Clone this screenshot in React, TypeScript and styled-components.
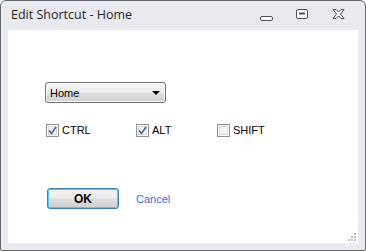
import styled, { createGlobalStyle } from "styled-components"

const GlobalStyle = createGlobalStyle`
  html, body {
    margin: 0;
    padding: 0;
    background: #ffffff;
  }
  * {
    box-sizing: border-box;
  }
`

// window frame
const Window = styled.div`
  width: 366px;
  height: 251px;
  display: flex;
  flex-direction: column;
  background: #e8eaef;
  border: 1px solid #62656c;
  border-radius: 6px 6px 2px 2px;
  padding: 0 7px 7px 7px;
  overflow: hidden;
`

const TitleBar = styled.div`
  height: 29px;
  flex: none;
  display: flex;
  align-items: center;
  padding-left: 3px;
`

const Title = styled.span`
  flex: 1;
  font-family: "Open Sans", "Noto Sans", sans-serif;
  font-size: 12.5px;
  color: #1f1f1f;
  margin-top: -3px;
`

const Caption = styled.div`
  display: flex;
  align-items: center;
  margin-top: -4px;
  margin-right: 2px;
`

const CaptionButton = styled.div<{ $low?: boolean }>`
  width: 36px;
  height: 16px;
  display: flex;
  align-items: ${({ $low }) => ($low ? "flex-end" : "center")};
  justify-content: center;
  padding-bottom: ${({ $low }) => ($low ? "1px" : "0")};
`

const Client = styled.div`
  position: relative;
  flex: 1;
  background: #ffffff;
  padding: 52px 0 0 37px;
  font-family: "Liberation Sans", Arial, sans-serif;
  font-size: 11px;
  color: #000000;
`

// combo box
const Combo = styled.div`
  width: 121px;
  height: 21px;
  display: flex;
  align-items: center;
  justify-content: space-between;
  padding: 0 5px 0 4px;
  border: 1px solid #707070;
  border-radius: 3px;
  background: linear-gradient(#f4f4f4 0%, #ececec 48%, #dfdfdf 52%, #d2d2d2 100%);
  box-shadow: inset 0 0 0 1px #fbfbfb;
`

const ComboArrow = styled.span`
  width: 0;
  height: 0;
  border-left: 4px solid transparent;
  border-right: 4px solid transparent;
  border-top: 4px solid #000000;
  margin-top: 1px;
`

// checkboxes
const CheckRow = styled.div`
  display: grid;
  grid-template-columns: 90px 81px auto;
  margin-top: 21px;
  margin-left: 1px;
`

const CheckItem = styled.label`
  display: flex;
  align-items: center;
  gap: 3px;
  height: 13px;
`

const Box = styled.span`
  width: 13px;
  height: 13px;
  flex: none;
  border: 1px solid #8e8f8f;
  background: #f4f4f4;
  box-shadow: inset 0 0 0 1px #ffffff, inset 0 0 0 2px #d8d9db;
  display: flex;
  align-items: center;
  justify-content: center;
`

const Label = styled.span`
  line-height: 13px;
`

// buttons
const ButtonRow = styled.div`
  display: flex;
  align-items: center;
  gap: 17px;
  margin-top: 51px;
  margin-left: 2px;
`

const OkButton = styled.div`
  width: 72px;
  height: 21px;
  display: flex;
  align-items: center;
  justify-content: center;
  border: 1px solid #3c7fb1;
  border-radius: 3px;
  background: linear-gradient(#f2f2f2 0%, #ebebeb 48%, #dddddd 52%, #cfcfcf 100%);
  box-shadow: inset 0 0 0 1px #48d0f4;
  font-weight: bold;
  font-size: 12px;
`

const CancelLink = styled.span`
  color: #3a6cf0;
  font-size: 11px;
`

const Grip = styled.svg`
  position: absolute;
  right: 2px;
  bottom: 2px;
`

function Check({ checked }: { checked: boolean }) {
  return (
    <Box>
      {checked && (
        <svg width="9" height="9" viewBox="0 0 9 9">
          <path d="M1 4.5 L3.5 7.5 L8 1" fill="none" stroke="#4a5f97" strokeWidth="1.6" />
        </svg>
      )}
    </Box>
  )
}

const shortcuts = [
  { label: "CTRL", checked: true },
  { label: "ALT", checked: true },
  { label: "SHIFT", checked: false },
]

export default function App() {
  return (
    <>
      <GlobalStyle />
      <Window>
        <TitleBar>
          <Title>Edit Shortcut - Home</Title>
          <Caption>
            <CaptionButton $low>
              <svg width="13" height="5" viewBox="0 0 13 5">
                <rect x="0.5" y="0.5" width="12" height="4" rx="1.5" fill="#ffffff" stroke="#4a4e57" />
              </svg>
            </CaptionButton>
            <CaptionButton>
              <svg width="12" height="10" viewBox="0 0 12 10">
                <rect x="0.5" y="0.5" width="11" height="9" rx="1.5" fill="#ffffff" stroke="#4a4e57" />
                <rect x="3" y="3.5" width="6" height="2" fill="#4a4e57" />
              </svg>
            </CaptionButton>
            <CaptionButton>
              <svg width="13" height="10" viewBox="0 0 13 10">
                <path
                  d="M1 0.5 H4 L6.5 3 L9 0.5 H12 L8.5 5 L12 9.5 H9 L6.5 7 L4 9.5 H1 L4.5 5 Z"
                  fill="#ffffff"
                  stroke="#4a4e57"
                  strokeLinejoin="round"
                />
              </svg>
            </CaptionButton>
          </Caption>
        </TitleBar>
        <Client>
          <Combo>
            <span>Home</span>
            <ComboArrow />
          </Combo>
          <CheckRow>
            {shortcuts.map((s) => (
              <CheckItem key={s.label}>
                <Check checked={s.checked} />
                <Label>{s.label}</Label>
              </CheckItem>
            ))}
          </CheckRow>
          <ButtonRow>
            <OkButton>OK</OkButton>
            <CancelLink>Cancel</CancelLink>
          </ButtonRow>
          <Grip width="8" height="8" viewBox="0 0 8 8">
            {[
              [6, 0],
              [6, 3],
              [3, 3],
              [6, 6],
              [3, 6],
              [0, 6],
            ].map(([x, y]) => (
              <rect key={`${x}-${y}`} x={x} y={y} width="2" height="2" fill="#b8bcc4" />
            ))}
          </Grip>
        </Client>
      </Window>
    </>
  )
}
